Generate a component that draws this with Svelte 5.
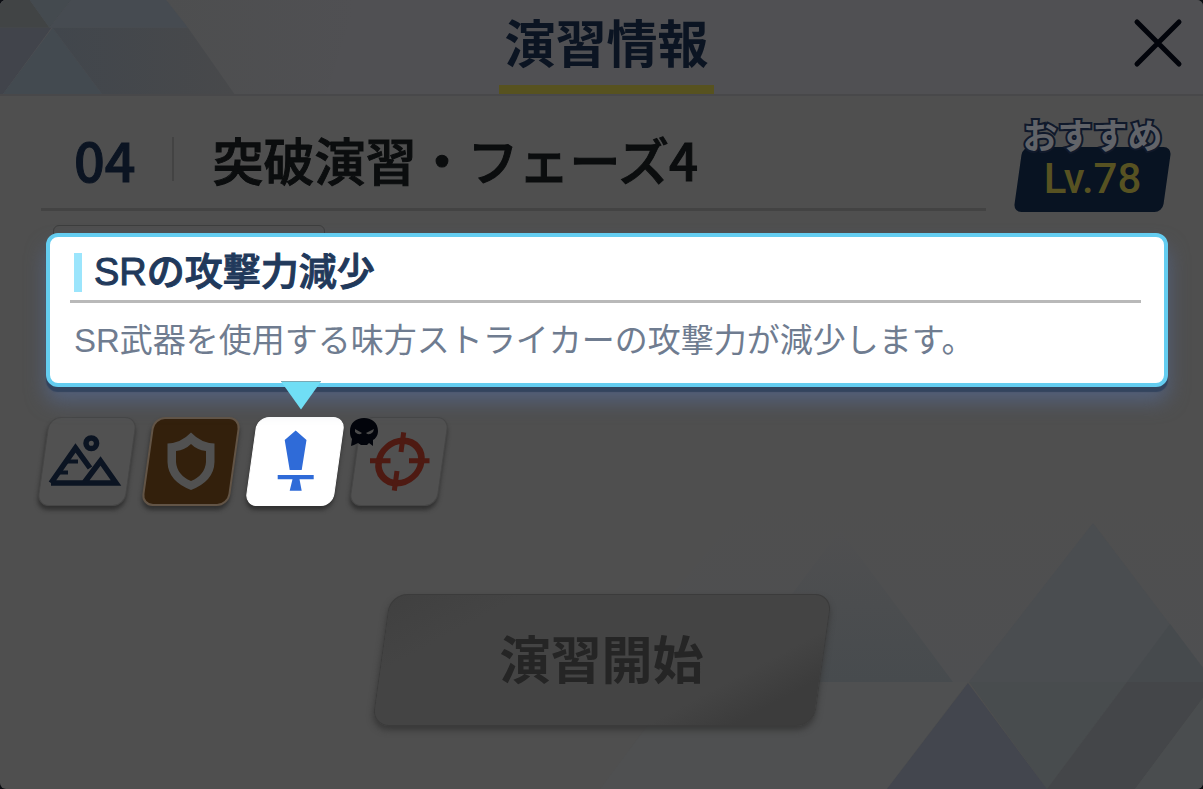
<script lang="ts">
	type Icon = 'terrain' | 'armor' | 'sword' | 'target';

	interface Condition {
		icon: Icon;
		label: string;
		boss?: boolean;
	}

	const conditions: Condition[] = [
		{ icon: 'terrain', label: '屋外' },
		{ icon: 'armor', label: '重装甲' },
		{ icon: 'sword', label: 'SRの攻撃力減少' },
		{ icon: 'target', label: '貫通', boss: true }
	];

	let selected = $state<Icon>('sword');
</script>

<main class="dialog">
	<svg class="body-pattern" viewBox="0 0 603 289" aria-hidden="true">
		<defs>
			<linearGradient id="fade" x1="0" y1="0" x2="0" y2="1">
				<stop offset="0" stop-color="#4f4f50" />
				<stop offset="1" stop-color="#474b4e" />
			</linearGradient>
			<linearGradient id="haze" x1="0" y1="0" x2="0" y2="1">
				<stop offset="0" stop-color="#4f4f4f" />
				<stop offset="1" stop-color="#4e4f51" />
			</linearGradient>
		</defs>
		<path d="M150 0 H603 V182 H0Z" fill="url(#haze)" />
		<path d="M0 289 L80 182 H368 L287 289Z" fill="#4f5051" />
		<path d="M240 30 L353 182 H126Z" fill="url(#fade)" />
		<path d="M493 23 L603 168 V182 H369Z" fill="#4a4d50" />
		<path d="M570 124 L603 168 V182 H527Z" fill="#464a4d" />
		<path d="M369 182 H527 L447 289Z" fill="#484c4e" />
		<path d="M368 183 L447 289 H287Z" fill="#43464e" />
		<path d="M527 182 H603 V198 L535 289 H447Z" fill="#444649" />
		<path d="M603 198 V289 H535Z" fill="#4a4d4f" />
	</svg>

	<header class="dialog-header">
		<svg class="header-pattern" viewBox="0 0 400 95" aria-hidden="true">
			<defs>
				<linearGradient id="band" x1="0" x2="1">
					<stop offset="0" stop-color="#41464c" />
					<stop offset="1" stop-color="#48494b" />
				</linearGradient>
				<linearGradient id="edge" x1="0" x2="1">
					<stop offset="0" stop-color="#4d4e4f" />
					<stop offset="1" stop-color="#505053" />
				</linearGradient>
			</defs>
			<path d="M168 0 H360 L330 95 H237Z" fill="url(#edge)" />
			<path d="M0 0 H30 L50 28 H0Z" fill="#414445" />
			<path d="M30 0 H72 L50 28Z" fill="#444a4f" />
			<path d="M72 0 H168 L190 28 H50Z" fill="#464b51" />
			<path d="M0 28 H52 L3 95 H0Z" fill="#41444b" />
			<path d="M53 28 L103 95 H3Z" fill="#434a50" />
			<path d="M53 28 H190 L237 95 H103Z" fill="url(#band)" />
		</svg>
		<h1>演習情報</h1>
		<button class="close" aria-label="閉じる">
			<svg viewBox="0 0 50 50" aria-hidden="true">
				<path d="M4 4 L46 46 M46 4 L4 46" />
			</svg>
		</button>
	</header>

	<section class="stage">
		<div class="stage-name">
			<span class="number">04</span>
			<h2>突破演習・フェーズ4</h2>
		</div>
		<div class="level">
			<span class="level-label">おすすめ</span>
			<span class="level-value">Lv.78</span>
		</div>
	</section>

	<div class="popup-area">
		<section class="popup" role="tooltip">
			<h3>SRの攻撃力減少</h3>
			<p>SR武器を使用する味方ストライカーの攻撃力が減少します。</p>
		</section>
	</div>

	<div class="conditions">
		{#each conditions as item (item.icon)}
			<button
				class="tile {item.icon}"
				class:active={selected === item.icon}
				aria-label={item.label}
				onclick={() => (selected = item.icon)}
			>
				<svg class="icon" viewBox="0 0 100 89" aria-hidden="true">
					{#if item.icon === 'terrain'}
						<g fill="none" stroke="#0b1422" stroke-width="5.500">
							<path d="M14 66 L38.500 31 L53 51 M14 66 H79 L63.500 44 L47 66" />
							<path d="M30 44.500 H41 M22 55.500 H31" stroke-width="4" />
							<circle cx="54.300" cy="26.300" r="5.300" />
						</g>
					{:else if item.icon === 'armor'}
						<path
							fill="#515151"
							fill-rule="evenodd"
							d="M50 15.500 Q60 26 73.500 26.500 V45 Q73 64 50 73 Q27 64 26.500 45 V26.500 Q40 26 50 15.500Z M50 27 Q44 33 35 34 V45 Q36 58 50 64 Q64 58 65 45 V34 Q56 33 50 27Z"
						/>
					{:else if item.icon === 'sword'}
						<path
							fill="#2f6bd8"
							d="M50.700 13.500 L61.500 23 L56.700 53 H44.700 L39.700 23Z M32.700 58 H68.700 V62.300 H54.500 L56.700 73.700 H44.700 L47.500 62.300 H32.700Z"
						/>
					{:else}
						<g fill="none" stroke="#4e1a12">
							<circle cx="57.300" cy="45" r="21.300" stroke-width="6.500" transform="skewX(-8)" />
							<path
								d="M21 43.700 H41.500 M60 43.700 H80.500 M54.700 15.300 L52 35 M48 54 L45.300 73.700"
								stroke-width="5"
							/>
						</g>
					{/if}
				</svg>
				{#if item.boss}
					<svg class="boss" viewBox="0 0 30 30" aria-hidden="true">
						<path
							fill="#02040b"
							d="M15 1 C23 1 29 6 29 14 C29 19 26 22 24 23 L24 29 L20 26 L18 28 H12 L9 26 L5 28 L2 29 L3 22 C1 19 1 17 1 14 C1 6 7 1 15 1Z"
						/>
						<path fill="#4b4b4b" d="M6 12 L13 16 Q10 19 6 15Z M25 12 L17 16 Q20 19 24 15Z" />
					</svg>
				{/if}
				{#if selected === item.icon}
					<svg class="pointer" viewBox="0 0 40 29" aria-hidden="true">
						<path d="M0 0.500 H40 L20 28.500Z" fill="#70def5" />
						<path d="M0 0.500 H40" stroke="#79a9b5" />
					</svg>
				{/if}
			</button>
		{/each}
	</div>

	<button class="start" disabled>演習開始</button>
</main>

<style>
	:global(body) {
		background: #0b0d12;
	}

	.dialog {
		position: relative;
		z-index: 0;
		box-sizing: border-box;
		min-height: 100vh;
		overflow: hidden;
		border-radius: 6px;
		background: #4f4f4f;
		color: #0b1422;
		font-family: 'Liberation Sans', 'Noto Sans CJK JP', sans-serif;
	}

	h1,
	h2,
	h3,
	p {
		margin: 0;
	}

	button {
		padding: 0;
		border: none;
		background: none;
		font-family: inherit;
		cursor: pointer;
	}

	svg {
		display: block;
	}

	.body-pattern {
		position: absolute;
		right: 0;
		bottom: 0;
		z-index: -1;
		width: 603px;
	}

	.dialog-header {
		position: relative;
		display: grid;
		grid-template-columns: 1fr auto 1fr;
		align-items: center;
		height: 94px;
		padding: 0 20px 0 30px;
		border-bottom: 2px solid #48484a;
		background: #505053;
	}

	.header-pattern {
		position: absolute;
		top: 0;
		left: 0;
		height: 100%;
	}

	h1 {
		grid-column: 2;
		align-self: end;
		padding: 0 5px 7px;
		border-bottom: 9px solid #57521f;
		font-family: 'Noto Sans CJK JP', sans-serif;
		font-size: 51px;
		font-weight: 700;
		line-height: 74px;
	}

	.close {
		align-self: start;
		justify-self: end;
		width: 50px;
		margin-top: 18px;
	}

	.close path {
		fill: none;
		stroke: #02040b;
		stroke-width: 5;
		stroke-linecap: round;
	}

	.stage {
		display: flex;
		align-items: flex-end;
		gap: 28px;
		padding: 20px 32px 0 41px;
	}

	.stage-name {
		display: flex;
		flex: 1;
		align-items: center;
		box-sizing: border-box;
		height: 92px;
		margin-bottom: 1px;
		padding-bottom: 10px;
		border-bottom: 3px solid #434343;
		font-family: 'Noto Sans CJK JP', sans-serif;
	}

	.number {
		padding: 0 36px 0 33px;
		border-right: 2px solid #434343;
		font-size: 54px;
		font-weight: 500;
		line-height: 44px;
		-webkit-text-stroke: 1px;
	}

	h2 {
		padding-left: 39px;
		color: #0b0d0e;
		font-size: 51px;
		font-weight: 500;
		line-height: 60px;
		-webkit-text-stroke: 1px;
	}

	.level {
		position: relative;
		display: flex;
		flex-direction: column;
		align-items: center;
		width: 157px;
		font-family: 'Noto Sans CJK JP', sans-serif;
	}

	.level::before {
		content: '';
		position: absolute;
		inset: 31px 4px 0;
		z-index: -1;
		border-radius: 8px;
		background: #081322;
		transform: skewX(-8deg);
	}

	.level-label {
		color: #626469;
		font-size: 35px;
		font-weight: 700;
		line-height: 36px;
		paint-order: stroke fill;
		-webkit-text-stroke: 4px #10192b;
	}

	.level-value {
		padding-bottom: 6px;
		color: #575222;
		font-family: Roboto, sans-serif;
		font-size: 42px;
		font-weight: 500;
		line-height: 54px;
	}

	.popup-area {
		position: relative;
		padding: 21px 35px 30px 46px;
	}

	.popup-area::before {
		content: '';
		position: absolute;
		top: 13px;
		left: 53px;
		width: 270px;
		height: 40px;
		border: 1px solid #3d3d3d;
		border-radius: 6px;
	}

	.popup {
		position: relative;
		padding: 16px 23px 20px 20px;
		border: 4px solid #64cdf0;
		border-radius: 12px;
		background: #fff;
		box-shadow:
			0 5px 1px #33445e,
			0 14px 20px #53617d;
	}

	h3 {
		display: flex;
		align-items: center;
		gap: 12px;
		padding: 0 4px 8px;
		border-bottom: 3px solid #b9b9b9;
		color: #21395b;
		font-size: 38px;
		font-weight: 500;
		line-height: 39px;
		-webkit-text-stroke: 1px;
	}

	h3::before {
		content: '';
		width: 8px;
		height: 39px;
		background: #9be5fc;
	}

	p {
		padding: 0 4px;
		margin-top: 16px;
		color: #6f7c90;
		font-size: 33px;
		line-height: 44px;
	}

	.conditions {
		display: flex;
		gap: 4px;
		padding-left: 37px;
	}

	.tile {
		position: relative;
		width: 100px;
		height: 89px;
	}

	.tile::before {
		content: '';
		position: absolute;
		inset: 0 6px;
		z-index: -1;
		box-sizing: border-box;
		border: 1px solid #464646;
		border-radius: 12px;
		background: #515151;
		box-shadow: 0 4px 4px #303030;
		transform: skewX(-8deg);
	}

	.armor::before {
		border: 2px solid #625446;
		background: #33200c;
	}

	.active::before {
		border-color: #fff;
		background: #fff;
	}

	.boss {
		position: absolute;
		top: 0;
		left: 0;
		width: 30px;
	}

	.pointer {
		position: absolute;
		top: -36px;
		left: 36px;
		width: 40px;
	}

	.start {
		position: relative;
		display: block;
		width: 456px;
		height: 132px;
		margin: 88px auto 63px;
		padding-bottom: 6px;
		color: #252525;
		font-family: 'Noto Sans CJK JP', sans-serif;
		font-size: 51px;
		font-weight: 700;
	}

	.start::before {
		content: '';
		position: absolute;
		inset: 0 7px;
		z-index: -1;
		box-sizing: border-box;
		border: 1px solid #3b3b3b;
		border-radius: 17px;
		background: linear-gradient(150deg, #404040, #444 20%, #444 75%, #3c3c3c 88%);
		box-shadow: 0 4px 6px #383838;
		transform: skewX(-8deg);
	}
</style>
